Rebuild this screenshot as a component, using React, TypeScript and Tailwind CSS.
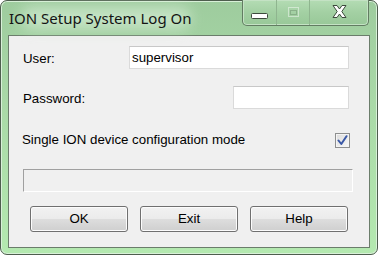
import React from 'react';

const ui = { fontFamily: '"Liberation Sans", Arial, sans-serif' };
const title = { fontFamily: '"Noto Sans", "Open Sans", sans-serif' };

// Caption button glyphs
const MinGlyph = () => (
    <svg width="17" height="7" viewBox="0 0 17 7">
        <rect x="0.5" y="0.5" width="16" height="5" rx="1" fill="#ffffff" stroke="#3c4a3c" />
    </svg>
);
const MaxGlyph = () => (
    <svg width="11" height="10" viewBox="0 0 11 10" opacity="0.45">
        <rect x="0.5" y="0.5" width="10" height="9" fill="none" stroke="#ffffff" />
        <rect x="2.5" y="3.5" width="6" height="4" fill="none" stroke="#6a8a6a" />
    </svg>
);
const CloseGlyph = () => (
    <svg width="17" height="15" viewBox="0 0 17 15">
        <path d="M2 1.5 L6 1.5 L8.5 5 L11 1.5 L15 1.5 L10.8 7.5 L15 13.5 L11 13.5 L8.5 10 L6 13.5 L2 13.5 L6.2 7.5 Z"
            fill="#ffffff" stroke="#3c4a3c" strokeWidth="1" strokeLinejoin="round" />
    </svg>
);

const Button: React.FC<{ label: string }> = ({ label }) => (
    <button
        className="w-[98px] h-[26px] rounded-[3px] border border-[#707070] text-[13.3px] text-black shadow-[inset_0_0_0_1px_#fcfcfc] bg-[linear-gradient(#f2f2f2_0%,#ebebeb_48%,#dddddd_52%,#cfcfcf_100%)]"
        style={ui}
    >
        {label}
    </button>
);

const App: React.FC = () => {
    return (
        <div className="w-[378px] h-[255px] bg-white">
            <div className="w-[378px] h-[255px] rounded-[7px] border border-[#4e5e4e] bg-[linear-gradient(#9ecc9e,#a9d9a7_40%,#b4e9b0)] shadow-[inset_0_0_0_1px_#d8f0d8] flex flex-col">
                {/* title bar */}
                <div className="h-[34px] flex items-start relative">
                    <div className="absolute left-[20px] top-[6px] w-[170px] h-[22px] rounded-full bg-[#cfe9cf] blur-[7px] opacity-80" />
                    <span className="relative ml-[8px] mt-[7px] text-[15px] leading-[20px] text-[#141414]" style={title}>
                        ION Setup System Log On
                    </span>
                    <div className="relative ml-auto mr-[8px] -mt-[1px] h-[26px] flex rounded-b-[5px] border border-t-0 border-[#627c62] overflow-hidden shadow-[inset_0_0_0_1px_#c4e2c4] bg-[linear-gradient(#b4dcb4,#a3d0a3_50%,#98c898)]">
                        <div className="w-[34px] flex items-center justify-center pt-[8px] border-r border-[#8fb58f]">
                            <MinGlyph />
                        </div>
                        <div className="w-[33px] flex items-center justify-center pb-[2px] border-r border-[#8fb58f]">
                            <MaxGlyph />
                        </div>
                        <div className="w-[58px] flex items-center justify-center pb-[2px]">
                            <CloseGlyph />
                        </div>
                    </div>
                </div>

                {/* client area */}
                <div className="mx-[7px] h-[213px] border border-[#6b7d6b] bg-[#f0f0f0] flex flex-col text-[13.3px] text-black" style={ui}>
                    <div className="mt-[10px] h-[23px] flex items-center pl-[14px] pr-[20px]">
                        <span className="pt-[2px]">User:</span>
                        <div className="ml-auto w-[220px] h-[23px] bg-white border border-[#dadada] border-t-[#c8c8c8] flex items-center pl-[2px]">
                            supervisor
                        </div>
                    </div>
                    <div className="mt-[17px] h-[23px] flex items-center pl-[14px] pr-[20px]">
                        <span className="pt-[2px]">Password:</span>
                        <div className="ml-auto w-[116px] h-[23px] bg-white border border-[#dadada] border-t-[#c8c8c8]" />
                    </div>
                    <div className="mt-[22px] h-[18px] flex items-center pl-[13px] pr-[19px]">
                        <span>Single ION device configuration mode</span>
                        <div className="ml-auto w-[15px] h-[15px] border border-[#8e8f8f] bg-[linear-gradient(135deg,#dcdcdc,#f8f8f8)] shadow-[inset_0_0_0_1px_#f4f4f4] flex items-center justify-center">
                            <svg width="11" height="11" viewBox="0 0 11 11">
                                <path d="M1.5 5.5 L4.3 9 L9.5 1.2" fill="none" stroke="#3a58a6" strokeWidth="2" strokeLinecap="round" strokeLinejoin="round" />
                            </svg>
                        </div>
                    </div>
                    <div className="mt-[20px] ml-[14px] mr-[16px] h-[23px] border border-[#a0a0a0] border-r-white border-b-white" />
                    <div className="mt-[14px] ml-[21px] flex gap-[12px]">
                        <Button label="OK" />
                        <Button label="Exit" />
                        <Button label="Help" />
                    </div>
                </div>
            </div>
        </div>
    );
};

export default App;
